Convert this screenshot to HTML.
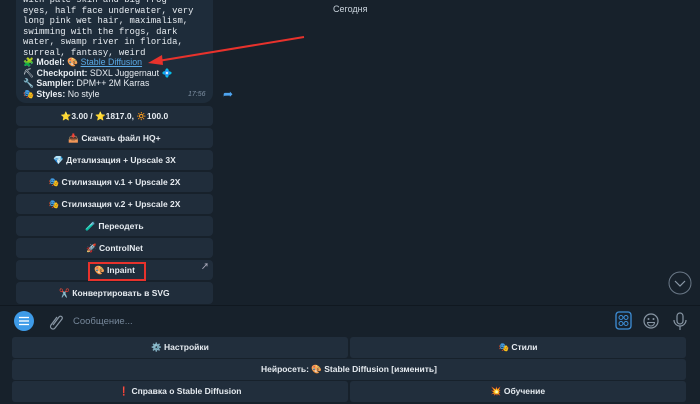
<!DOCTYPE html>
<html><head><meta charset="utf-8"><style>
*{margin:0;padding:0;box-sizing:border-box}
body{width:700px;height:404px;overflow:hidden;background:#17212b;font-family:"Liberation Sans","Noto Sans CJK SC",sans-serif;color:#fff;position:relative}
.bubble{position:absolute;left:16px;top:-10px;width:197px;height:113px;background:#1e2c3a;border-radius:10px}
.mono{position:absolute;left:23px;font-family:"Liberation Mono",monospace;font-size:8.9px;color:#e8edf2;line-height:10.5px;white-space:pre}
.ln{position:absolute;left:23px;font-size:8.8px;color:#e8edf2;white-space:nowrap}
.ln b{font-weight:bold}
.btn{position:absolute;left:16px;width:197px;height:20px;background:#202d3b;border-radius:4px;font-size:8.5px;font-weight:bold;color:#e6ebf0;display:flex;align-items:center;justify-content:center}
.kb{position:absolute;height:21px;background:#212e3c;border-radius:3px;font-size:8.5px;font-weight:bold;color:#e6ebf0;display:flex;align-items:center;justify-content:center}
</style></head><body>
<div class="bubble"></div>
<div class="mono" style="top:-5px">with pale skin and big frog
eyes, half face underwater, very
long pink wet hair, maximalism,
swimming with the frogs, dark
water, swamp river in florida,
surreal, fantasy, weird</div>
<div class="ln" style="top:57px">🧩 <b>Model:</b> 🎨 <span style="color:#5aa9e6;text-decoration:underline">Stable Diffusion</span></div>
<div class="ln" style="top:67.5px">⛏ <b>Checkpoint:</b> SDXL Juggernaut 💠</div>
<div class="ln" style="top:78px">🔧 <b>Sampler:</b> DPM++ 2M Karras</div>
<div class="ln" style="top:88.5px">🎭 <b>Styles:</b> No style</div>
<div style="position:absolute;left:188px;top:91px;font-size:7px;font-style:italic;color:#7f91a4">17:56</div>
<div style="position:absolute;left:223px;top:87px;color:#4ea4f0;font-size:12px">➦</div>
<div style="position:absolute;left:333px;top:4px;font-size:9px;color:#c9d3dc">Сегодня</div>

<div class="btn" style="top:106px">⭐3.00 / ⭐1817.0, 🔅100.0</div>
<div class="btn" style="top:128px">📥 Скачать файл HQ+</div>
<div class="btn" style="top:150px">💎 Детализация + Upscale 3X</div>
<div class="btn" style="top:172px">🎭 Стилизация v.1 + Upscale 2X</div>
<div class="btn" style="top:194px">🎭 Стилизация v.2 + Upscale 2X</div>
<div class="btn" style="top:216px">🧪 Переодеть</div>
<div class="btn" style="top:238px">🚀 ControlNet</div>
<div class="btn" style="top:260px">🎨 Inpaint<span style="position:absolute;right:4px;top:1px;font-size:8px;color:#aab">↗</span></div>
<div class="btn" style="top:282px;height:22px">✂️ Конвертировать в SVG</div>
<div style="position:absolute;left:88px;top:262px;width:58px;height:19px;border:2px solid #e8322c"></div>
<svg style="position:absolute;left:0;top:0" width="700" height="404">
<line x1="304" y1="37" x2="158" y2="61" stroke="#e8322c" stroke-width="2"/>
<polygon points="148,63 162,55 163,65" fill="#e8322c"/>
<circle cx="680" cy="283" r="11" fill="none" stroke="#6a7887" stroke-width="1"/>
<polyline points="675,281 680,286 685,281" fill="none" stroke="#8a98a6" stroke-width="1.2"/>
</svg>
<div style="position:absolute;left:0;top:305px;width:700px;height:99px;background:#17212b;border-top:1px solid #101820"></div>
<svg style="position:absolute;left:0;top:305px" width="700" height="33">
<circle cx="24" cy="16" r="10" fill="#3e9be8"/>
<g stroke="#fff" stroke-width="1.3"><line x1="19" y1="12.5" x2="29" y2="12.5"/><line x1="19" y1="16" x2="29" y2="16"/><line x1="19" y1="19.5" x2="29" y2="19.5"/></g>
<path d="M57 12 l-6 8 a2.5 2.5 0 0 0 4 3 l7-9 a1.7 1.7 0 0 0 -3-2 l-6 8" fill="none" stroke="#8896a4" stroke-width="1.2"/>
<rect x="616" y="7" width="15" height="17" rx="3" fill="none" stroke="#3e8fd8" stroke-width="1.3"/>
<g fill="none" stroke="#3e8fd8" stroke-width="1"><circle cx="621" cy="12.5" r="2"/><circle cx="626" cy="12.5" r="2"/><circle cx="621" cy="18.5" r="2"/><circle cx="626" cy="18.5" r="2"/></g>
<circle cx="651" cy="16" r="7" fill="none" stroke="#8896a4" stroke-width="1.2"/>
<circle cx="648.5" cy="14" r="1" fill="#8896a4"/><circle cx="653.5" cy="14" r="1" fill="#8896a4"/>
<path d="M647.5 17.5 h7 a3.5 3.5 0 0 1 -7 0z" fill="none" stroke="#8896a4"/>
<rect x="677" y="8" width="6" height="11" rx="3" fill="none" stroke="#8896a4" stroke-width="1.2"/>
<path d="M674 15 a6 6 0 0 0 12 0 M680 21 v4" fill="none" stroke="#8896a4" stroke-width="1.2"/>
</svg>
<div style="position:absolute;left:73px;top:316px;font-size:9.5px;color:#76879a">Сообщение...</div>
<div class="kb" style="left:12px;top:337px;width:336px">⚙️ Настройки</div>
<div class="kb" style="left:350px;top:337px;width:336px">🎭 Стили</div>
<div class="kb" style="left:12px;top:359px;width:674px">Нейросеть: 🎨 Stable Diffusion [изменить]</div>
<div class="kb" style="left:12px;top:381px;width:336px">❗ Справка о Stable Diffusion</div>
<div class="kb" style="left:350px;top:381px;width:336px">💥 Обучение</div>
</body></html>
